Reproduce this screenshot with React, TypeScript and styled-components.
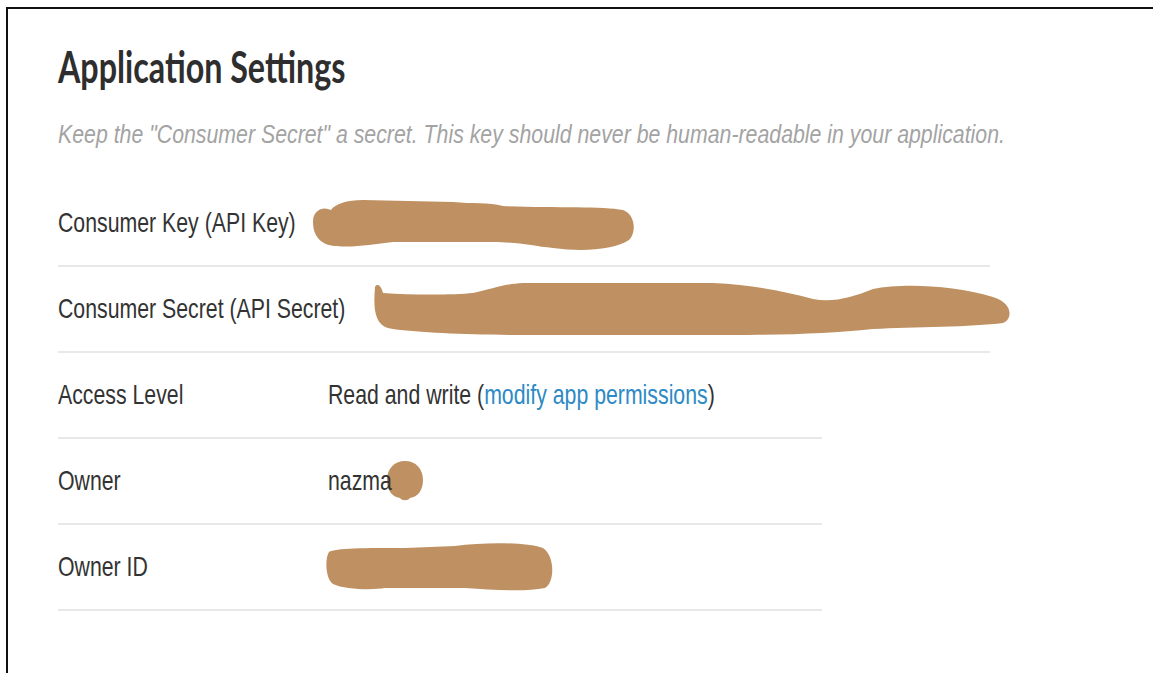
import React from "react";
import styled, { createGlobalStyle } from "styled-components";

const GlobalStyle = createGlobalStyle`
  html, body {
    margin: 0;
    padding: 0;
    background: #fff;
  }
  body {
    font-family: "Liberation Sans", Arial, sans-serif;
    overflow: hidden;
  }
`;

const Frame = styled.div`
  margin: 7px 0 0 6px;
  min-height: calc(100vh - 7px);
  box-sizing: border-box;
  border-top: 2px solid #111;
  border-left: 2px solid #111;
`;

const Panel = styled.section`
  padding: 36px 0 0 50px;
`;

const Title = styled.h1`
  margin: 0;
  font-family: "Lato", "Liberation Sans", sans-serif;
  font-weight: 700;
  font-size: 43px;
  line-height: 43px;
  color: #2e2e2e;
  white-space: nowrap;
  transform: scaleX(0.75);
  transform-origin: left center;
`;

const Hint = styled.p`
  margin: 34px 0 0;
  font-style: italic;
  font-size: 25px;
  line-height: 25px;
  color: #a3a3a3;
  white-space: nowrap;
  transform: scaleX(0.852);
  transform-origin: left center;
`;

const Table = styled.div`
  margin-top: 34px;
`;

const Row = styled.div<{ $wide?: boolean }>`
  display: flex;
  align-items: center;
  height: 84px;
  width: ${(p) => (p.$wide ? 932 : 764)}px;
  border-bottom: 2px solid #e8e8e8;
`;

const Label = styled.div`
  flex: 0 0 270px;
  min-width: 0;
  font-size: 28px;
  line-height: 28px;
  color: #333;
`;

const Value = styled.div`
  display: flex;
  align-items: center;
  font-size: 28px;
  line-height: 28px;
  color: #333;
`;

const Squish = styled.span`
  display: inline-block;
  white-space: nowrap;
  transform: scaleX(0.76);
  transform-origin: left center;
`;

const Link = styled.a`
  color: #2d8ac4;
  text-decoration: none;
`;

// hand-drawn marker strokes covering private values
const Redaction = styled.svg<{ $offset: number }>`
  display: block;
  flex: none;
  margin-left: ${(p) => p.$offset}px;
  fill: #bf9162;
`;

const KeyBlot = () => (
  <Redaction $offset={-15} width="323" height="55" viewBox="0 0 323 55">
    <path d="M0 26 C0 14 10 10 18 14 C22 8 34 4 50 4 L140 6 C160 8 175 6 190 10 C240 12 290 10 310 14 C322 18 324 36 316 44 C300 54 270 56 240 52 C220 50 205 46 180 46 L80 46 C60 48 40 52 24 50 C8 50 0 40 0 26 Z" />
  </Redaction>
);

const SecretBlot = () => (
  <Redaction $offset={45} width="640" height="56" viewBox="0 0 640 56">
    <path d="M2 6 C4 2 8 4 10 12 C40 14 80 14 100 12 C120 8 130 3 150 2 L340 2 C380 4 410 10 440 18 C460 22 480 16 500 8 C530 2 580 4 620 16 C640 22 640 38 630 42 C600 46 540 46 500 48 C460 52 420 54 360 54 L160 54 C100 54 50 52 20 48 C2 46 0 30 2 6 Z" />
  </Redaction>
);

const NameBlot = () => (
  <Redaction $offset={-26} width="38" height="42" viewBox="0 0 38 42">
    <path d="M19 1 C30 1 37 9 37 20 C37 30 32 37 24 38 C22 41 16 41 14 38 C6 37 1 30 1 20 C1 9 8 1 19 1 Z" />
  </Redaction>
);

const IdBlot = () => (
  <Redaction $offset={-3} width="230" height="50" viewBox="0 0 230 50">
    <path d="M4 10 C10 6 40 6 80 6 L130 4 C160 0 200 0 218 6 C230 14 230 40 220 46 C200 50 170 48 140 46 L60 46 C50 48 20 48 8 42 C0 36 0 16 4 10 Z" />
  </Redaction>
);

const App: React.FC = () => {
  return (
    <>
      <GlobalStyle />
      <Frame>
        <Panel>
          <Title>Application Settings</Title>
          <Hint>
            Keep the "Consumer Secret" a secret. This key should never be
            human-readable in your application.
          </Hint>
          <Table>
            <Row $wide>
              <Label>
                <Squish>Consumer Key (API Key)</Squish>
              </Label>
              <Value>
                <KeyBlot />
              </Value>
            </Row>
            <Row $wide>
              <Label>
                <Squish>Consumer Secret (API Secret)</Squish>
              </Label>
              <Value>
                <SecretBlot />
              </Value>
            </Row>
            <Row>
              <Label>
                <Squish>Access Level</Squish>
              </Label>
              <Value>
                <Squish>
                  Read and write (<Link href="#">modify app permissions</Link>)
                </Squish>
              </Value>
            </Row>
            <Row>
              <Label>
                <Squish>Owner</Squish>
              </Label>
              <Value>
                <Squish>nazma</Squish>
                <NameBlot />
              </Value>
            </Row>
            <Row>
              <Label>
                <Squish>Owner ID</Squish>
              </Label>
              <Value>
                <IdBlot />
              </Value>
            </Row>
          </Table>
        </Panel>
      </Frame>
    </>
  );
};

export default App;
